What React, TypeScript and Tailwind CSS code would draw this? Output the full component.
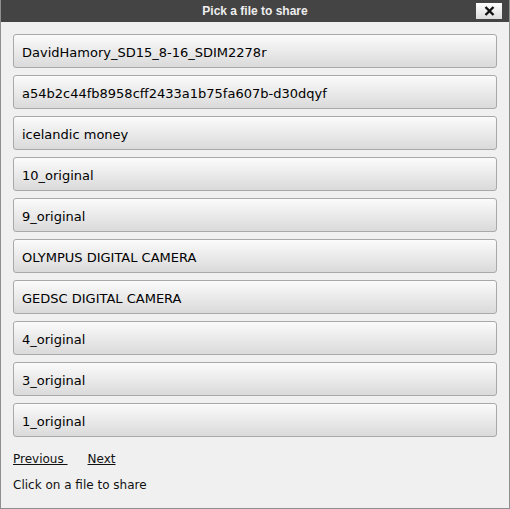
import React from "react";

const files = [
    "DavidHamory_SD15_8-16_SDIM2278r",
    "a54b2c44fb8958cff2433a1b75fa607b-d30dqyf",
    "icelandic money",
    "10_original",
    "9_original",
    "OLYMPUS DIGITAL CAMERA",
    "GEDSC DIGITAL CAMERA",
    "4_original",
    "3_original",
    "1_original",
];

export default function App() {
    return (
        <div className="w-[510px] h-[509px] bg-[#f0f0f0] border border-[#8f8f8f] border-t-0 flex flex-col font-['DejaVu_Sans',Verdana,sans-serif] text-[#111]">
            <div className="h-[22px] bg-[#444444] flex items-center relative shrink-0">
                <div className="w-full text-center text-[12px] font-bold text-[#eeeeee] font-['Liberation_Sans',Arial,sans-serif]">
                    Pick a file to share
                </div>
                <button className="absolute right-[7px] top-[3px] w-[26px] h-[16px] bg-gradient-to-b from-white to-[#dcdcdc] flex items-center justify-center">
                    <svg width="11" height="10" viewBox="0 0 11 10">
                        <path d="M1.5 1 L9.5 9 M9.5 1 L1.5 9" stroke="#111" strokeWidth="2.4" />
                    </svg>
                </button>
            </div>
            <div className="flex flex-col gap-[7px] px-[12px] pt-[12px]">
                {files.map((f) => (
                    <button
                        key={f}
                        className="h-[34px] w-full text-left pl-[8px] pt-[4px] text-[13px] text-black border border-[#a9a9a9] rounded-[3px] bg-gradient-to-b from-[#fbfbfb] to-[#dadada]"
                    >
                        {f}
                    </button>
                ))}
            </div>
            <div className="flex gap-[20px] px-[12px] mt-[15px] text-[12px] leading-[15px]">
                <a className="underline">Previous&nbsp;</a>
                <a className="underline">Next</a>
            </div>
            <div className="px-[12px] mt-[11px] text-[12px] leading-[15px]">Click on a file to share</div>
        </div>
    );
}
